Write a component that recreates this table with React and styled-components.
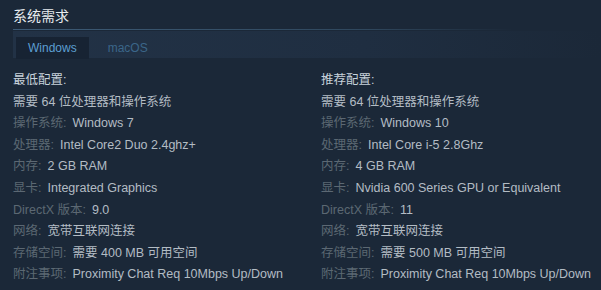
import React from "react";
import styled, { createGlobalStyle } from "styled-components";

const GlobalStyle = createGlobalStyle`
  html, body {
    margin: 0;
    padding: 0;
    background: #1b2838;
  }
  body {
    font-family: "Liberation Sans", Arial, "Noto Sans CJK SC", sans-serif;
  }
`;

const minimum = [
  ["操作系统", "Windows 7"],
  ["处理器", "Intel Core2 Duo 2.4ghz+"],
  ["内存", "2 GB RAM"],
  ["显卡", "Integrated Graphics"],
  ["DirectX 版本", "9.0"],
  ["网络", "宽带互联网连接"],
  ["存储空间", "需要 400 MB 可用空间"],
  ["附注事项", "Proximity Chat Req 10Mbps Up/Down"],
];

const recommended = [
  ["操作系统", "Windows 10"],
  ["处理器", "Intel Core i-5 2.8Ghz"],
  ["内存", "4 GB RAM"],
  ["显卡", "Nvidia 600 Series GPU or Equivalent"],
  ["DirectX 版本", "11"],
  ["网络", "宽带互联网连接"],
  ["存储空间", "需要 500 MB 可用空间"],
  ["附注事项", "Proximity Chat Req 10Mbps Up/Down"],
];

const Page = styled.div`
  width: 601px;
  height: 290px;
  background: #1b2838;
  padding: 7px 0 0 13px;
  box-sizing: border-box;
  overflow: hidden;
`;

const Title = styled.h2`
  margin: 0;
  font-size: 14px;
  font-weight: normal;
  color: #e8ecef;
  line-height: 18px;
  padding-bottom: 4px;
  border-bottom: 1px solid transparent;
  border-image: linear-gradient(to right, #3d5b76 0%, #2f475d 60%, #1b2838 85%) 1;
`;

const TabStrip = styled.div`
  display: flex;
  align-items: flex-end;
  height: 27px;
  margin-top: 1px;
  padding-left: 3px;
  background: linear-gradient(to right, #223246 0%, #1f2e41 60%, #1b2838 100%);
`;

const Tab = styled.div`
  height: 22px;
  padding: 0 12px;
  display: flex;
  align-items: center;
  font-size: 12px;
  color: ${(p) => (p.active ? "#5c9fd2" : "#3b6689")};
  background: ${(p) => (p.active ? "#172333" : "transparent")};
  margin-right: 7px;
  margin-bottom: -1px;
`;

const Columns = styled.div`
  display: grid;
  grid-template-columns: 308px 1fr;
  margin-top: 12px;
`;

const Column = styled.div`
  display: flex;
  flex-direction: column;
`;

const Line = styled.div`
  font-size: 12.5px;
  line-height: 21.6px;
  color: ${(p) => (p.head ? "#c7d2db" : "#b3bcc4")};
  white-space: nowrap;
`;

const Label = styled.span`
  color: #5c6873;
  margin-right: 6px;
`;

const Spec = ({ heading, rows }) => (
  <Column>
    <Line head>{heading}</Line>
    <Line>需要 64 位处理器和操作系统</Line>
    {rows.map(([k, v]) => (
      <Line key={k}>
        <Label>{k}:</Label>
        {v}
      </Line>
    ))}
  </Column>
);

export default function App() {
  return (
    <Page>
      <GlobalStyle />
      <Title>系统需求</Title>
      <TabStrip>
        <Tab active>Windows</Tab>
        <Tab>macOS</Tab>
      </TabStrip>
      <Columns>
        <Spec heading="最低配置:" rows={minimum} />
        <Spec heading="推荐配置:" rows={recommended} />
      </Columns>
    </Page>
  );
}
